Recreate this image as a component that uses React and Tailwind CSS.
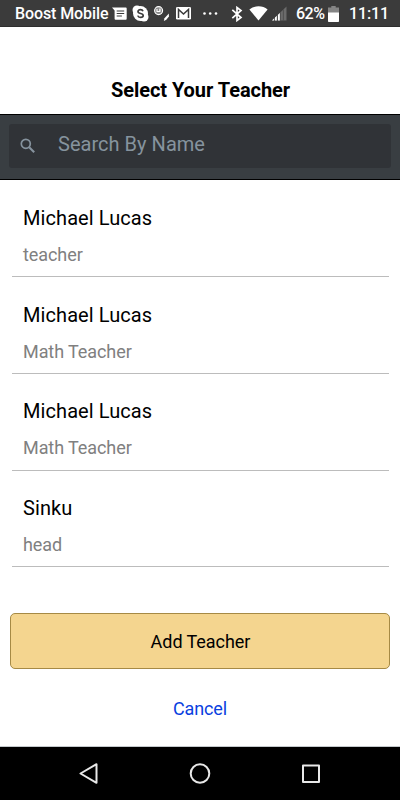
import React, { useState } from 'react';

const teachers = [
  { id: 1, name: 'Michael Lucas', role: 'teacher' },
  { id: 2, name: 'Michael Lucas', role: 'Math Teacher' },
  { id: 3, name: 'Michael Lucas', role: 'Math Teacher' },
  { id: 4, name: 'Sinku', role: 'head' },
];

function StatusBar() {
  return (
    <div className="flex h-[27px] shrink-0 items-center border-b border-[#2e2e2e] bg-[#3b3b3b] pl-[15px] pt-px text-base font-medium leading-none text-white">
      <span className="w-[97px] whitespace-nowrap pt-px tracking-[-0.1px]">Boost Mobile</span>
      {/* Messages */}
      <svg className="h-[14px] w-[15px] shrink-0" viewBox="0 0 15 14" fill="none">
        <path d="M0 0.500h13.800q.9 0 .9.900v10.400q0 .9-.9.900H3.500q-.9 0-.9-.9V3.500z" fill="#fff" />
        <path d="M4.700 4h7.500M4.700 6.500h7.500M4.700 9h5.200" stroke="#3b3b3b" strokeWidth="1.200" />
      </svg>
      {/* Skype */}
      <svg className="ml-[5px] h-[17px] w-[17px] shrink-0" viewBox="0 0 17 17" fill="none">
        <circle cx="8.500" cy="8.500" r="7.500" fill="#fff" />
        <circle cx="5" cy="5" r="4.500" fill="#fff" />
        <circle cx="12" cy="12" r="4.500" fill="#fff" />
        <path d="M11 6.300C10.600 5.200 9.800 4.700 8.500 4.700c-1.500 0-2.500.7-2.500 1.800 0 2.700 5.200 1.300 5.200 4 0 1.200-1.100 1.900-2.600 1.900s-2.500-.7-2.800-1.800" stroke="#3b3b3b" strokeWidth="1.700" />
      </svg>
      {/* Disc with pen */}
      <svg className="ml-[5px] h-[16px] w-[16px] shrink-0" viewBox="0 0 16 16" fill="none">
        <circle cx="4.600" cy="4.600" r="4" fill="#8a8a8a" stroke="#fff" strokeWidth="1.100" />
        <path d="M3 3v2.500h2.800V3.200M6 2.400v3" stroke="#fff" strokeWidth="1.100" />
        <path d="M14.900 7.500v2.900l-2.600 3.300-2.500 1.200.7-2.700z" fill="#fff" />
      </svg>
      {/* Mail */}
      <svg className="ml-[6px] h-[13px] w-[15px] shrink-0" viewBox="0 0 15 13" fill="none">
        <rect width="15" height="12.600" rx="1.300" fill="#fff" />
        <path d="M2.500 11V2.500L7.500 7l5-4.500V11" stroke="#3b3b3b" strokeWidth="1.500" />
      </svg>
      <svg className="ml-[12px] h-[3px] w-[15px] shrink-0" viewBox="0 0 15 3" fill="#fff">
        <circle cx="1.500" cy="1.500" r="1.300" />
        <circle cx="7.200" cy="1.500" r="1.300" />
        <circle cx="13" cy="1.500" r="1.300" />
      </svg>
      {/* Bluetooth */}
      <svg className="ml-[13px] h-[16px] w-[12px] shrink-0" viewBox="0 0 12 16" fill="none" stroke="#fff" strokeWidth="1.700">
        <path d="M1.300 3.800L10 11.500 6 14.500v-13L10 4.500 1.300 12.200" />
      </svg>
      {/* Wifi */}
      <svg className="ml-[6px] h-[15px] w-[19px] shrink-0" viewBox="0 0 19 15" fill="#fff">
        <path d="M9.500 14.600L.4 3.500C3 1.400 6 .3 9.500.3s6.500 1.100 9.100 3.200z" />
      </svg>
      {/* Signal */}
      <svg className="ml-[4px] h-[15px] w-[15px] shrink-0" viewBox="0 0 15 15">
        <path d="M0 14.500L14.500.5v14z" fill="#6b6b6b" />
        <path d="M0 14.500h2v-2zM3 14.500V11.500l1.900-1.700v4.700zM6 14.500V8.800l1.900-1.800v7.500z" fill="#fff" />
        <path d="M5.400 14.500V9.700M8.400 14.500V6.500M11.400 14.500V3.500" stroke="#4a4a4a" strokeWidth=".8" />
      </svg>
      <span className="ml-[9px] w-[32px] whitespace-nowrap pt-px tracking-[-0.5px]">62%</span>
      {/* Battery */}
      <svg className="h-[16px] w-[11px] shrink-0" viewBox="0 0 11 16">
        <path d="M3.300 0h4.400v1.500H11V7H0V1.500h3.300z" fill="#858585" />
        <path d="M0 6.500h11v8.700q0 .8-.8.800H.8q-.8 0-.8-.8z" fill="#fff" />
      </svg>
      <span className="ml-[10px] whitespace-nowrap pt-px tracking-[-0.1px]">11:11</span>
    </div>
  );
}

function SearchBar({ value, onChange }) {
  return (
    <div className="h-[66px] shrink-0 border-y border-black bg-[#393e42] px-[9px] pt-[9px]">
      <label className="flex h-[44px] items-center rounded-[3px] bg-[#303337] pl-[11px]">
        <svg className="h-4 w-4 shrink-0" viewBox="0 0 16 16" fill="none" stroke="#86939e">
          <circle cx="5.800" cy="5.800" r="4.500" strokeWidth="1.700" />
          <path d="M9.200 9.200l5 5" strokeWidth="2.100" />
        </svg>
        <input
          value={value}
          onChange={onChange}
          placeholder="Search By Name"
          className="mb-[5px] ml-[22px] w-[300px] bg-transparent text-xl leading-6 tracking-[0.03px] text-[#86939e] outline-none placeholder:text-[#86939e]"
        />
      </label>
    </div>
  );
}

function TeacherRow({ teacher }) {
  return (
    <li className="h-[96.7px] border-b border-[#bcbcbc] pl-[11px] pt-[25.5px]">
      <div className="text-xl leading-6 tracking-[0.08px] text-black">{teacher.name}</div>
      <div className="mt-[13px] text-lg leading-6 tracking-[-0.08px] text-[#808080]">{teacher.role}</div>
    </li>
  );
}

function NavBar() {
  return (
    <div className="flex h-[54px] shrink-0 items-center justify-between border-t border-[#c4c9cc] bg-black px-[79px]">
      <svg className="h-[22px] w-[20px]" viewBox="0 0 20 22" fill="none" stroke="#e8e8e8" strokeWidth="2" strokeLinejoin="round">
        <path d="M1.500 10.500L17.500 1.200v18.600z" />
      </svg>
      <svg className="h-[22px] w-[22px]" viewBox="0 0 22 22" fill="none" stroke="#e8e8e8" strokeWidth="2">
        <circle cx="11" cy="10.500" r="9.300" />
      </svg>
      <svg className="h-[20px] w-[20px]" viewBox="0 0 20 20" fill="none" stroke="#e8e8e8" strokeWidth="2" strokeLinejoin="round">
        <rect x="2" y="1.500" width="16" height="16.500" />
      </svg>
    </div>
  );
}

export default function App() {
  const [search, setSearch] = useState('');

  const visible = teachers.filter((t) => t.name.toLowerCase().includes(search.toLowerCase()));

  return (
    <div className="flex h-[800px] w-[400px] flex-col overflow-hidden bg-white font-['Roboto',sans-serif]">
      <StatusBar />
      <h1 className="h-[87px] shrink-0 pt-[51px] text-center text-xl font-bold leading-6 text-black">
        <span className="pl-px tracking-[-0.05px]">Select Your Teacher</span>
      </h1>
      <SearchBar value={search} onChange={(e) => setSearch(e.target.value)} />
      <ul className="ml-3 mr-[11px] h-[387px] shrink-0 pt-[0.5px]">
        {visible.map((t) => (
          <TeacherRow key={t.id} teacher={t} />
        ))}
      </ul>
      <div className="flex flex-1 flex-col items-center px-[10px] pt-[46px]">
        <button type="button" className="h-[56px] w-full rounded-[5px] border border-[#a68a45] bg-[#f4d58f] pl-px pt-[2px] text-lg tracking-[-0.05px] text-black">
          Add Teacher
        </button>
        <button type="button" className="mt-[28px] text-lg leading-6 tracking-[-0.1px] text-[#0a3fe0]">
          Cancel
        </button>
      </div>
      <NavBar />
    </div>
  );
}
